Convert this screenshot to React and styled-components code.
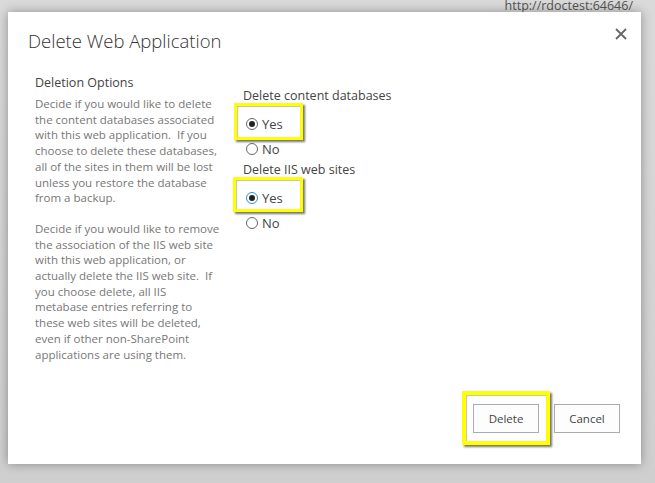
import React from "react";
import styled, { createGlobalStyle } from "styled-components";

const Global = createGlobalStyle`
  html, body { margin: 0; padding: 0; }
  body {
    background: #d2d2d2;
    font-family: "Open Sans", "Noto Sans", sans-serif;
    width: 655px;
    height: 483px;
    overflow: hidden;
  }
`;

const Page = styled.div`
  width: 655px;
  height: 483px;
  box-sizing: border-box;
  padding: 0 14px 0 8px;
  background: linear-gradient(#dadada, #cfcfcf);
`;

const UrlBar = styled.div`
  height: 12px;
  overflow: hidden;
  text-align: right;
  padding-right: 8px;
  font-size: 12.5px;
  line-height: 11px;
  color: #555;
`;

const Dialog = styled.div`
  position: relative;
  width: 633px;
  height: 452px;
  box-sizing: border-box;
  background: #fff;
  box-shadow: 0 0 10px rgba(0, 0, 0, 0.35);
  padding: 16px 21px 31px 20px;
  display: flex;
  flex-direction: column;
`;

const TitleRow = styled.div`
  display: flex;
  justify-content: space-between;
  align-items: flex-start;
`;

const Title = styled.h1`
  margin: 0;
  font-weight: 300;
  font-size: 18.5px;
  line-height: 26px;
  color: #333;
`;

const Close = styled.button`
  border: 0;
  background: none;
  padding: 0;
  margin: -1px -8px 0 0;
  width: 14px;
  height: 14px;
  cursor: pointer;
`;

const Body = styled.div`
  display: flex;
  margin-top: 20px;
  flex: 1;
`;

const LeftCol = styled.div`
  width: 208px;
  padding-left: 7px;
`;

const SectionTitle = styled.div`
  font-size: 12.5px;
  line-height: 18px;
  color: #444;
`;

const Desc = styled.p`
  margin: 4px 0 0;
  font-size: 11.5px;
  line-height: 15.7px;
  color: #777;
  white-space: nowrap;
  & + & {
    margin-top: 15px;
  }
`;

const RightCol = styled.div`
  padding-top: 13px;
`;

const FieldLabel = styled.div`
  font-size: 12.5px;
  line-height: 18px;
  color: #444;
`;

const Option = styled.label`
  position: relative;
  display: flex;
  align-items: center;
  height: 25px;
  padding-left: 3px;
  font-size: 13px;
  color: #444;
  gap: 4px;
  margin-top: ${(p) => (p.$first ? 6 : 0)}px;
`;

const Radio = styled.span`
  width: 12px;
  height: 12px;
  box-sizing: border-box;
  border-radius: 50%;
  border: 1px solid ${(p) => (p.$focus ? "#2b8fd6" : "#666")};
  background: #fff;
  display: flex;
  align-items: center;
  justify-content: center;
  &::after {
    content: "";
    width: 6px;
    height: 6px;
    border-radius: 50%;
    background: ${(p) => (p.$checked ? "#222" : "transparent")};
  }
`;

const Highlight = styled.span`
  position: absolute;
  top: ${(p) => p.$top}px;
  left: ${(p) => p.$left}px;
  width: ${(p) => p.$w}px;
  height: ${(p) => p.$h}px;
  box-sizing: border-box;
  border: ${(p) => p.$b}px solid #ffff00;
  box-shadow: 2px 2px 2px rgba(0, 0, 0, 0.55), inset 1px 1px 1px rgba(0, 0, 0, 0.25);
  pointer-events: none;
`;

const Footer = styled.div`
  display: flex;
  justify-content: flex-end;
  gap: 15px;
`;

const BtnWrap = styled.div`
  position: relative;
`;

const Button = styled.button`
  width: 66px;
  height: 29px;
  border: 1px solid #ababab;
  background: #fdfdfd;
  font-family: inherit;
  font-size: 11.5px;
  color: #444;
  padding: 0;
`;

const Group = ({ label, focus, boxLeft, boxW, boxH }) => (
  <>
    <FieldLabel>{label}</FieldLabel>
    <Option $first>
      <Highlight $top={-8} $left={boxLeft} $w={boxW} $h={boxH} $b={3} />
      <Radio $checked $focus={focus} />
      Yes
    </Option>
    <Option>
      <Radio />
      No
    </Option>
  </>
);

export default function App() {
  return (
    <>
      <Global />
      <Page>
        <UrlBar>http://rdoctest:64646/</UrlBar>
        <Dialog>
          <TitleRow>
            <Title>Delete Web Application</Title>
            <Close aria-label="Close">
              <svg width="14" height="14" viewBox="0 0 14 14">
                <path d="M2 2 L12 12 M12 2 L2 12" stroke="#666" strokeWidth="1.8" />
              </svg>
            </Close>
          </TitleRow>
          <Body>
            <LeftCol>
              <SectionTitle>Deletion Options</SectionTitle>
              <Desc>
                Decide if you would like to delete<br />
                the content databases associated<br />
                with this web application.&nbsp; If you<br />
                choose to delete these databases,<br />
                all of the sites in them will be lost<br />
                unless you restore the database<br />
                from a backup.
              </Desc>
              <Desc>
                Decide if you would like to remove<br />
                the association of the IIS web site<br />
                with this web application, or<br />
                actually delete the IIS web site.&nbsp; If<br />
                you choose delete, all IIS<br />
                metabase entries referring to<br />
                these web sites will be deleted,<br />
                even if other non-SharePoint<br />
                applications are using them.
              </Desc>
            </LeftCol>
            <RightCol>
              <Group label="Delete content databases" boxLeft={-9} boxW={69} boxH={37} />
              <Group label="Delete IIS web sites" focus boxLeft={-10} boxW={70} boxH={35} />
            </RightCol>
          </Body>
          <Footer>
            <BtnWrap>
              <Highlight $top={-13} $left={-11} $w={88} $h={54} $b={4} />
              <Button>Delete</Button>
            </BtnWrap>
            <BtnWrap>
              <Button>Cancel</Button>
            </BtnWrap>
          </Footer>
        </Dialog>
      </Page>
    </>
  );
}
